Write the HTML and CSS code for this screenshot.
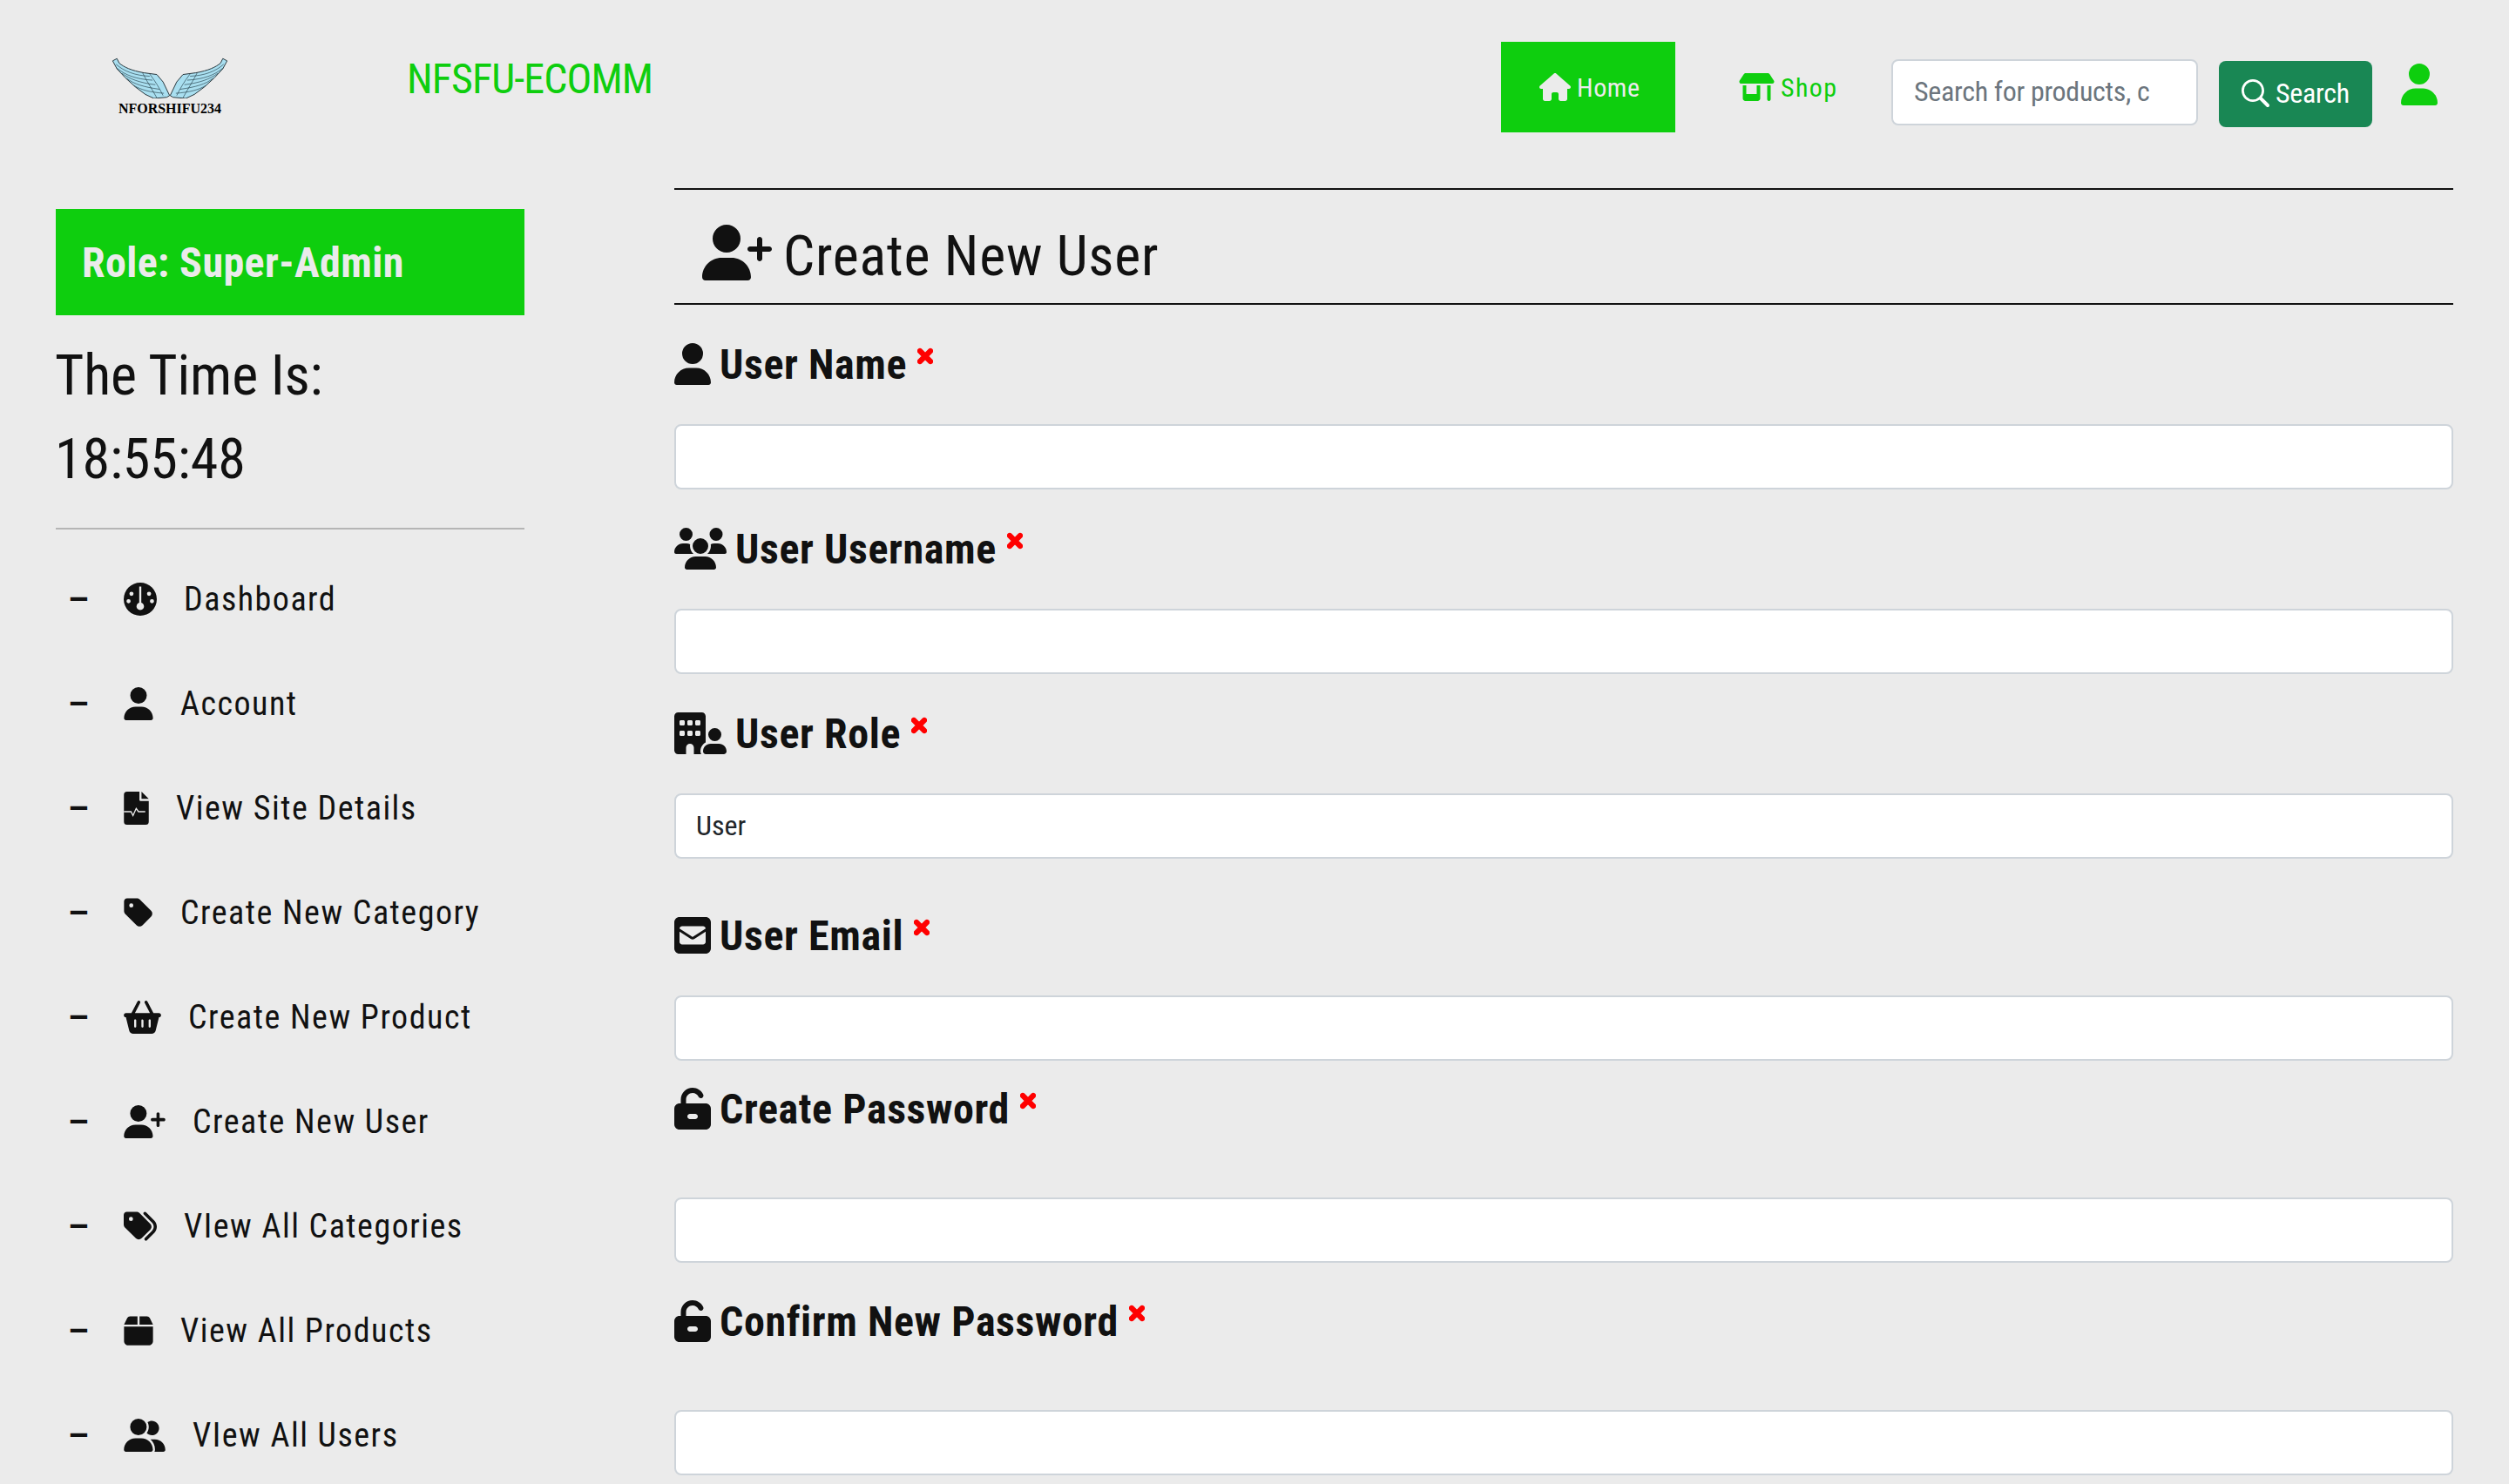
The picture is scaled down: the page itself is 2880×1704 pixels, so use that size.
FILE: index.html
```html
<!DOCTYPE html>
<html lang="en">
<head>
<meta charset="utf-8">
<title>Create New User</title>
<link rel="stylesheet" href="styles.css">
</head>
<body>
<svg class="defs" aria-hidden="true">
  <symbol id="i-user" viewBox="0 0 448 512"><path d="M224 256A128 128 0 1 0 224 0a128 128 0 1 0 0 256zm-45.700 48C79.800 304 0 383.800 0 482.300C0 498.700 13.300 512 29.700 512H418.300c16.400 0 29.700-13.300 29.700-29.700C448 383.800 368.200 304 269.700 304H178.300z"/></symbol>
  <symbol id="i-user-plus" viewBox="0 0 640 512"><path d="M96 128a128 128 0 1 1 256 0A128 128 0 1 1 96 128zM0 482.300C0 383.800 79.800 304 178.300 304h91.400C368.200 304 448 383.800 448 482.300c0 16.400-13.300 29.700-29.700 29.700H29.700C13.300 512 0 498.700 0 482.300zM504 312V248H440c-13.300 0-24-10.700-24-24s10.700-24 24-24h64V136c0-13.300 10.700-24 24-24s24 10.700 24 24v64h64c13.300 0 24 10.700 24 24s-10.700 24-24 24H552v64c0 13.300-10.700 24-24 24s-24-10.700-24-24z"/></symbol>
  <symbol id="i-users" viewBox="0 0 640 512"><path d="M144 0a80 80 0 1 1 0 160A80 80 0 1 1 144 0zM512 0a80 80 0 1 1 0 160A80 80 0 1 1 512 0zM0 298.700C0 239.800 47.800 192 106.700 192h42.700c15.900 0 31 3.500 44.600 9.700c-1.300 7.200-1.900 14.700-1.900 22.300c0 38.200 16.800 72.500 43.300 96c-.2 0-.4 0-.7 0H21.300C9.600 320 0 310.400 0 298.700zM405.300 320c-.2 0-.4 0-.7 0c26.600-23.500 43.300-57.800 43.300-96c0-7.600-.7-15-1.900-22.300c13.600-6.300 28.700-9.700 44.600-9.700h42.700C592.200 192 640 239.800 640 298.700c0 11.800-9.600 21.300-21.300 21.300H405.300zM224 224a96 96 0 1 1 192 0 96 96 0 1 1 -192 0zM128 485.300C128 411.700 187.700 352 261.300 352H378.700C452.300 352 512 411.700 512 485.300c0 14.700-11.900 26.700-26.700 26.700H154.700c-14.700 0-26.700-11.900-26.700-26.700z"/></symbol>
  <symbol id="i-user-group" viewBox="0 0 640 512"><path d="M96 128a128 128 0 1 1 256 0A128 128 0 1 1 96 128zM0 482.300C0 383.800 79.800 304 178.300 304h91.400C368.200 304 448 383.800 448 482.300c0 16.400-13.300 29.700-29.700 29.700H29.700C13.300 512 0 498.700 0 482.300zM609.300 512H471.400c5.400-9.400 8.600-20.300 8.600-32v-8c0-60.700-27.100-115.200-69.800-151.800c2.400-.1 4.700-.2 7.100-.2h61.400C567.800 320 640 392.200 640 481.300c0 17-13.800 30.700-30.700 30.700zM432 256c-31 0-59-12.600-79.300-32.900C372.400 196.500 384 163.600 384 128c0-26.800-6.600-52.100-18.300-74.300C384.300 40.100 407.200 32 432 32c61.900 0 112 50.100 112 112s-50.100 112-112 112z"/></symbol>
  <symbol id="i-house" viewBox="0 0 576 512"><path d="M575.800 255.500c0 18-15 32.100-32 32.100h-32l.7 160.200c0 2.700-.2 5.400-.5 8.100V472c0 22.100-17.900 40-40 40H456c-1.100 0-2.200 0-3.300-.1c-1.400 .1-2.800 .1-4.200 .1H416 392c-22.100 0-40-17.900-40-40V448 384c0-17.700-14.300-32-32-32H256c-17.700 0-32 14.300-32 32v64 24c0 22.100-17.900 40-40 40H160 128.100c-1.500 0-3-.1-4.500-.2c-1.200 .1-2.400 .2-3.600 .2H104c-22.100 0-40-17.900-40-40V360c0-.9 0-1.900 .1-2.800V287.600H32c-18 0-32-14-32-32.100c0-9 3-17 10-24L266.400 8c7-7 15-8 22-8s15 2 21 7L564.800 231.500c8 7 12 15 11 24z"/></symbol>
  <symbol id="i-shop" viewBox="0 0 640 512"><path d="M36.800 192H603.200c20.300 0 36.800-16.500 36.800-36.800c0-7.300-2.200-14.400-6.200-20.400L558.200 21.400C549.300 8 534.400 0 518.300 0H121.700c-16 0-31 8-39.900 21.400L6.200 134.700c-4 6.100-6.200 13.200-6.200 20.400C0 175.500 16.500 192 36.800 192zM64 224V384v80c0 26.500 21.500 48 48 48H336c26.500 0 48-21.500 48-48V384 224H320V384H128V224H64zm448 0V480c0 17.700 14.300 32 32 32s32-14.300 32-32V224H512z"/></symbol>
  <symbol id="i-search" viewBox="0 0 512 512"><path fill-rule="evenodd" d="M416 208c0 45.900-14.900 88.300-40 122.700L502.600 457.400c12.500 12.500 12.500 32.800 0 45.300s-32.800 12.500-45.300 0L330.700 376c-34.400 25.200-76.800 40-122.700 40C93.100 416 0 322.900 0 208S93.100 0 208 0S416 93.100 416 208zM208 372a164 164 0 1 0 0-328 164 164 0 1 0 0 328z"/></symbol>
  <symbol id="i-tag" viewBox="0 0 448 512"><path d="M0 80V229.500c0 17 6.700 33.300 18.700 45.300l176 176c25 25 65.500 25 90.500 0L418.700 317.300c25-25 25-65.500 0-90.500l-176-176c-12-12-28.300-18.700-45.300-18.700H48C21.500 32 0 53.500 0 80zm112 32a32 32 0 1 1 0 64 32 32 0 1 1 0-64z"/></symbol>
  <symbol id="i-tags" viewBox="0 0 512 512"><path d="M345 39.100L472.800 168.400c52.400 53 52.400 138.200 0 191.200L360.800 472.900c-9.300 9.400-24.500 9.500-33.900 .2s-9.500-24.500-.2-33.900L438.600 325.900c33.900-34.300 33.900-89.400 0-123.700L310.900 72.900c-9.300-9.400-9.200-24.600 .2-33.900s24.600-9.200 33.900 .2zM0 229.500V80C0 53.500 21.500 32 48 32H197.500c17 0 33.300 6.700 45.300 18.700l168 168c25 25 25 65.500 0 90.500L277.300 442.700c-25 25-65.500 25-90.500 0l-168-168C6.700 262.700 0 246.500 0 229.500zM144 144a32 32 0 1 0 -64 0 32 32 0 1 0 64 0z"/></symbol>
  <symbol id="i-basket" viewBox="0 0 576 512"><path d="M253.300 35.100c6.100-11.800 1.500-26.300-10.200-32.400s-26.300-1.500-32.400 10.200L117.600 192H32c-17.700 0-32 14.300-32 32s14.300 32 32 32L83.900 463.500C91 492 116.600 512 146 512H430c29.400 0 55-20 62.100-48.500L544 256c17.700 0 32-14.300 32-32s-14.300-32-32-32H458.400L365.300 12.900C359.200 1.200 344.700-3.400 332.900 2.700s-16.300 20.600-10.200 32.400L404.300 192H171.700L253.300 35.100zM192 304v96c0 8.800-7.200 16-16 16s-16-7.200-16-16V304c0-8.800 7.200-16 16-16s16 7.200 16 16zm96-16c8.800 0 16 7.200 16 16v96c0 8.800-7.200 16-16 16s-16-7.200-16-16V304c0-8.800 7.200-16 16-16s16 7.200 16 16zm128 16v96c0 8.800-7.200 16-16 16s-16-7.200-16-16V304c0-8.800 7.200-16 16-16s16 7.200 16 16z"/></symbol>
  <symbol id="i-box" viewBox="0 0 448 512"><path d="M50.700 58.500L0 160H208V32H93.700C75.500 32 58.900 42.300 50.700 58.500zM240 160H448L397.300 58.500C389.100 42.300 372.500 32 354.300 32H240V160zm208 32H0V416c0 35.300 28.700 64 64 64H384c35.300 0 64-28.700 64-64V192z"/></symbol>
  <symbol id="i-building-user" viewBox="0 0 640 512"><path d="M48 0C21.500 0 0 21.500 0 48V464c0 26.500 21.500 48 48 48h96V432c0-26.500 21.500-48 48-48s48 21.500 48 48v80h89.900c-6.300-10.200-9.900-22.200-9.900-35.100c0-46.900 25.800-87.800 64-109.200V271.800 48c0-26.500-21.500-48-48-48H48zM64 240c0-8.800 7.200-16 16-16h32c8.800 0 16 7.200 16 16v32c0 8.800-7.200 16-16 16H80c-8.800 0-16-7.200-16-16V240zm112-16h32c8.800 0 16 7.200 16 16v32c0 8.800-7.200 16-16 16H176c-8.800 0-16-7.200-16-16V240c0-8.800 7.200-16 16-16zm80 16c0-8.800 7.200-16 16-16h32c8.800 0 16 7.200 16 16v32c0 8.800-7.200 16-16 16H272c-8.800 0-16-7.200-16-16V240zM80 96h32c8.800 0 16 7.200 16 16v32c0 8.800-7.200 16-16 16H80c-8.800 0-16-7.200-16-16V112c0-8.800 7.200-16 16-16zm80 16c0-8.800 7.200-16 16-16h32c8.800 0 16 7.200 16 16v32c0 8.800-7.200 16-16 16H176c-8.800 0-16-7.200-16-16V112zM272 96h32c8.800 0 16 7.200 16 16v32c0 8.800-7.200 16-16 16H272c-8.800 0-16-7.200-16-16V112c0-8.800 7.200-16 16-16zM576 272a80 80 0 1 0 -160 0 80 80 0 1 0 160 0zM352 477.100c0 19.300 15.600 34.900 34.900 34.900H605.100c19.300 0 34.900-15.600 34.900-34.900c0-51.400-41.700-93.100-93.100-93.100H445.100c-51.400 0-93.100 41.700-93.100 93.100z"/></symbol>
  <symbol id="i-envelope" viewBox="0 0 448 512"><path d="M64 32C28.700 32 0 60.700 0 96V416c0 35.300 28.700 64 64 64H384c35.300 0 64-28.700 64-64V96c0-35.300-28.700-64-64-64H64zM218 271.700L64.200 172.400C66 156.400 79.500 144 96 144H352c16.500 0 30 12.400 31.800 28.400L230 271.700c-1.800 1.200-3.900 1.800-6 1.800s-4.200-.6-6-1.800zm29.400 26.900L384 210.400V336c0 17.700-14.300 32-32 32H96c-17.700 0-32-14.300-32-32V210.400l136.600 88.200c7 4.500 15.100 6.900 23.400 6.900s16.400-2.400 23.400-6.900z"/></symbol>
  <symbol id="i-unlock" viewBox="0 0 448 512"><path fill-rule="evenodd" d="M144 144c0-44.200 35.800-80 80-80c31.900 0 59.400 18.600 72.300 45.700c7.600 16 26.700 22.800 42.600 15.200s22.800-26.700 15.200-42.600C331 33.700 281.500 0 224 0C144.500 0 80 64.500 80 144v48H64c-35.300 0-64 28.700-64 64V448c0 35.300 28.700 64 64 64H384c35.300 0 64-28.700 64-64V256c0-35.300-28.700-64-64-64H144V144zM192 320h64c17.700 0 32 14.300 32 32s-14.300 32-32 32H192c-17.700 0-32-14.300-32-32s14.300-32 32-32z"/></symbol>
  <symbol id="i-x" viewBox="0 0 384 512"><path stroke="currentColor" stroke-width="70" d="M342.600 150.600c12.500-12.500 12.500-32.800 0-45.300s-32.800-12.500-45.300 0L192 210.700 86.600 105.400c-12.500-12.500-32.800-12.500-45.300 0s-12.500 32.800 0 45.300L146.700 256 41.400 361.400c-12.500 12.500-12.500 32.800 0 45.300s32.800 12.500 45.300 0L192 301.300 297.400 406.600c12.500 12.500 32.800 12.500 45.300 0s12.500-32.800 0-45.300L237.300 256 342.600 150.600z"/></symbol>
  <symbol id="i-gauge" viewBox="0 0 512 512"><path fill-rule="evenodd" d="M256 0a256 256 0 1 0 0 512 256 256 0 1 0 0-512zM240 60h32v250a58 58 0 1 1-32 0zM120 140a32 32 0 1 1 0 64 32 32 0 1 1 0-64zM392 140a32 32 0 1 1 0 64 32 32 0 1 1 0-64zM75 255a32 32 0 1 1 0 64 32 32 0 1 1 0-64zM437 255a32 32 0 1 1 0 64 32 32 0 1 1 0-64z"/></symbol>
  <symbol id="i-file" viewBox="0 0 384 512"><path d="M48 0H240V128a16 16 0 0 0 16 16H384V464a48 48 0 0 1-48 48H48a48 48 0 0 1-48-48V48A48 48 0 0 1 48 0zM272 0L384 112H272z"/><path fill="none" stroke="#ebebeb" stroke-width="18" d="M0 310H110L140 370 190 260 225 310H330"/></symbol>
</svg>

<header class="topbar">
  <div class="logo">
    <svg class="wings" viewBox="80 40 412 150" aria-hidden="true">
      <g class="wing">
        <path class="wing-body" d="M85 58L100 50 108 66C125 80 150 92 195 100L240 106 262 132 285 180 275 186 230 190 200 176 165 150 130 118 100 86Z"/>
        <path class="wing-line" d="M97 70C125 95 165 110 215 112M100 84C130 108 165 122 225 126M118 102C145 122 180 135 235 142M135 120C160 140 195 150 250 158M160 145C185 160 215 168 265 172M190 100C205 130 225 160 240 188M215 104C235 130 250 155 262 180"/>
      </g>
      <g class="wing" transform="translate(572 0) scale(-1 1)">
        <path class="wing-body" d="M85 58L100 50 108 66C125 80 150 92 195 100L240 106 262 132 285 180 275 186 230 190 200 176 165 150 130 118 100 86Z"/>
        <path class="wing-line" d="M97 70C125 95 165 110 215 112M100 84C130 108 165 122 225 126M118 102C145 122 180 135 235 142M135 120C160 140 195 150 250 158M160 145C185 160 215 168 265 172M190 100C205 130 225 160 240 188M215 104C235 130 250 155 262 180"/>
      </g>
    </svg>
    <span class="logo-text">NFORSHIFU234</span>
  </div>
  <a class="brand" href="#">NFSFU-ECOMM</a>
  <nav class="topnav">
    <a class="topnav-link is-active" href="#"><svg class="ico ico-32"><use href="#i-house"/></svg>Home</a>
    <a class="topnav-link" href="#"><svg class="ico ico-32"><use href="#i-shop"/></svg>Shop</a>
  </nav>
  <form class="search">
    <input class="search-input" type="text" placeholder="Search for products, c">
    <button class="search-btn" type="button"><svg class="ico ico-32 ico-sq"><use href="#i-search"/></svg>Search</button>
  </form>
  <svg class="ico ico-user-top"><use href="#i-user"/></svg>
</header>

<div class="layout">
  <aside class="sidebar">
    <div class="role">Role: Super-Admin</div>
    <div class="clock">The Time Is:<br>18:55:48</div>
    <hr class="divider">
    <ul class="menu">
      <li class="menu-item"><span class="dash">–</span><svg class="ico m-38"><use href="#i-gauge"/></svg><a href="#">Dashboard</a></li>
      <li class="menu-item"><span class="dash">–</span><svg class="ico m-34"><use href="#i-user"/></svg><a href="#">Account</a></li>
      <li class="menu-item"><span class="dash">–</span><svg class="ico m-28"><use href="#i-file"/></svg><a href="#">View Site Details</a></li>
      <li class="menu-item"><span class="dash">–</span><svg class="ico m-34"><use href="#i-tag"/></svg><a href="#">Create New Category</a></li>
      <li class="menu-item"><span class="dash">–</span><svg class="ico m-43"><use href="#i-basket"/></svg><a href="#">Create New Product</a></li>
      <li class="menu-item"><span class="dash">–</span><svg class="ico m-48"><use href="#i-user-plus"/></svg><a href="#">Create New User</a></li>
      <li class="menu-item"><span class="dash">–</span><svg class="ico m-38"><use href="#i-tags"/></svg><a href="#">VIew All Categories</a></li>
      <li class="menu-item"><span class="dash">–</span><svg class="ico m-34"><use href="#i-box"/></svg><a href="#">View All Products</a></li>
      <li class="menu-item"><span class="dash">–</span><svg class="ico m-48"><use href="#i-user-group"/></svg><a href="#">VIew All Users</a></li>
    </ul>
  </aside>

  <main class="content">
    <h1 class="page-title"><svg class="ico ico-title"><use href="#i-user-plus"/></svg>Create New User</h1>
    <form class="form">
      <div class="field">
        <label class="field-label"><svg class="ico l-42"><use href="#i-user"/></svg>User Name<svg class="ico req"><use href="#i-x"/></svg></label>
        <input class="field-input" type="text">
      </div>
      <div class="field">
        <label class="field-label"><svg class="ico l-60"><use href="#i-users"/></svg>User Username<svg class="ico req"><use href="#i-x"/></svg></label>
        <input class="field-input" type="text">
      </div>
      <div class="field">
        <label class="field-label"><svg class="ico l-60"><use href="#i-building-user"/></svg>User Role<svg class="ico req"><use href="#i-x"/></svg></label>
        <input class="field-input" type="text" value="User">
      </div>
      <div class="field field-email">
        <label class="field-label"><svg class="ico l-42"><use href="#i-envelope"/></svg>User Email<svg class="ico req"><use href="#i-x"/></svg></label>
        <input class="field-input" type="text">
      </div>
      <div class="field field-pass">
        <label class="field-label"><svg class="ico l-42"><use href="#i-unlock"/></svg>Create Password<svg class="ico req"><use href="#i-x"/></svg></label>
        <input class="field-input" type="password">
      </div>
      <div class="field field-confirm">
        <label class="field-label"><svg class="ico l-42"><use href="#i-unlock"/></svg>Confirm New Password<svg class="ico req"><use href="#i-x"/></svg></label>
        <input class="field-input" type="password">
      </div>
    </form>
  </main>
</div>
</body>
</html>
```
FILE: styles.css
```css
* { box-sizing: border-box; }
html, body { margin: 0; height: 100%; overflow: hidden; }
body {
  background: #ebebeb;
  color: #111;
  font-family: "Roboto", "Liberation Sans", sans-serif;
  font-stretch: 75%;
}
a { color: inherit; text-decoration: none; }
.defs { display: none; }
.ico { display: block; fill: currentColor; flex: none; }

/* top bar */
.topbar { display: flex; align-items: flex-start; height: 216px; padding: 48px 0 0 127px; }
.logo { width: 136px; margin-top: 16px; display: flex; flex-direction: column; align-items: center; }
.wings { width: 136px; height: 49px; display: block; }
.wing-body { fill: #a9dff0; stroke: #26343a; stroke-width: 3; }
.wing-line { fill: none; stroke: #26404c; stroke-width: 2; }
.logo-text {
  font-family: "Liberation Serif", serif;
  font-weight: 700;
  font-size: 16px;
  line-height: 18px;
  margin-top: 3px;
  color: #000;
  white-space: nowrap;
}
.brand {
  margin: 17px 0 0 204px;
  font-size: 48px;
  line-height: 52px;
  letter-spacing: -0.9px;
  color: #0ece0e;
  white-space: nowrap;
}
.topnav { display: flex; margin-left: auto; }
.topnav-link {
  display: flex;
  align-items: center;
  gap: 7px;
  height: 104px;
  width: 200px;
  padding-left: 44px;
  font-size: 30px;
  letter-spacing: 0.6px;
  color: #0ece0e;
}
.topnav-link.is-active { background: #0ece0e; color: #ebebeb; width: 200px; margin-right: 30px; }
.topnav-link + .topnav-link { padding-left: 43px; width: 218px; letter-spacing: 1.4px; }
.ico-32 { height: 32px; width: 36px; }
.topnav-link:nth-child(2) .ico-32 { width: 41px; }
.ico-sq { width: 32px; }
.search { display: flex; align-items: flex-start; gap: 24px; margin-top: 20px; }
.search-input {
  width: 352px;
  height: 76px;
  padding: 0 24px 2px;
  background: #fff;
  border: 2px solid #ced4da;
  border-radius: 8px;
  font: inherit;
  font-size: 32px;
  font-stretch: 75%;
  letter-spacing: -0.3px;
  color: #212529;
}
.search-input::placeholder { color: #6c757d; opacity: 1; }
.search-btn {
  display: flex;
  align-items: center;
  gap: 7px;
  width: 176px;
  height: 76px;
  margin-top: 2px;
  padding: 0 0 2px 26px;
  background: #198754;
  color: #fff;
  border: 0;
  border-radius: 8px;
  font: inherit;
  font-size: 32px;
  font-stretch: 75%;
  letter-spacing: -0.3px;
}
.ico-user-top { width: 42px; height: 48px; margin: 25px 82px 0 33px; color: #0ece0e; }

/* layout */
.layout { display: flex; align-items: flex-start; }
.sidebar { width: 538px; margin: 24px 172px 0 64px; flex: none; }
.role {
  display: flex;
  align-items: center;
  height: 122px;
  padding-left: 30px;
  background: #0ece0e;
  color: #ebebeb;
  font-size: 48px;
  font-weight: 700;
  letter-spacing: 0.4px;
}
.clock { margin-top: 22px; margin-left: -1px; font-size: 64px; line-height: 96px; letter-spacing: -0.1px; }
.divider { margin: 30px 0 20px; border: 0; border-top: 2px solid #b5b5b5; }
.menu { list-style: none; margin: 0; padding: 0; }
.menu-item {
  display: flex;
  align-items: center;
  height: 120px;
  font-size: 38px;
  letter-spacing: 1.5px;
  white-space: nowrap;
}
.dash { width: 78px; padding-left: 14px; font-weight: 700; flex: none; font-stretch: 100%; letter-spacing: 0; }
.menu-item .ico { height: 38px; margin-right: 31px; }
.m-28 { width: 29px; }
.m-34 { width: 34px; }
.m-38 { width: 38px; }
.m-43 { width: 43px; }
.m-48 { width: 48px; }

/* main */
.content { width: 2042px; flex: none; }
.page-title {
  display: flex;
  align-items: center;
  gap: 13px;
  height: 134px;
  margin: 0;
  padding: 22px 0 0 32px;
  border-top: 2px solid #111;
  border-bottom: 2px solid #111;
  font-size: 64px;
  font-weight: 400;
  letter-spacing: 0.75px;
  white-space: nowrap;
}
.ico-title { width: 80px; height: 64px; margin-top: -8px; }
.form { display: flex; flex-direction: column; }
.field { margin-top: 44px; }
.field-label {
  display: flex;
  align-items: center;
  gap: 10px;
  height: 48px;
  margin-bottom: 45px;
  font-size: 48px;
  font-weight: 700;
  letter-spacing: 0.6px;
  white-space: nowrap;
}
.l-42 { width: 42px; height: 48px; }
.l-60 { width: 60px; height: 48px; }
.req { width: 18px; height: 24px; margin: -18px 0 0 2px; color: #f00; }
.field-input {
  display: block;
  width: 100%;
  height: 75px;
  padding: 0 23px 2px;
  background: #fff;
  border: 2px solid #ced4da;
  border-radius: 8px;
  font: inherit;
  font-size: 32px;
  font-stretch: 75%;
  color: #212529;
}
.field-email { margin-top: 64px; }
.field-pass { margin-top: 31px; }
.field-pass .field-label, .field-confirm .field-label { margin-bottom: 78px; }
.field-confirm { margin-top: 43px; }
```
